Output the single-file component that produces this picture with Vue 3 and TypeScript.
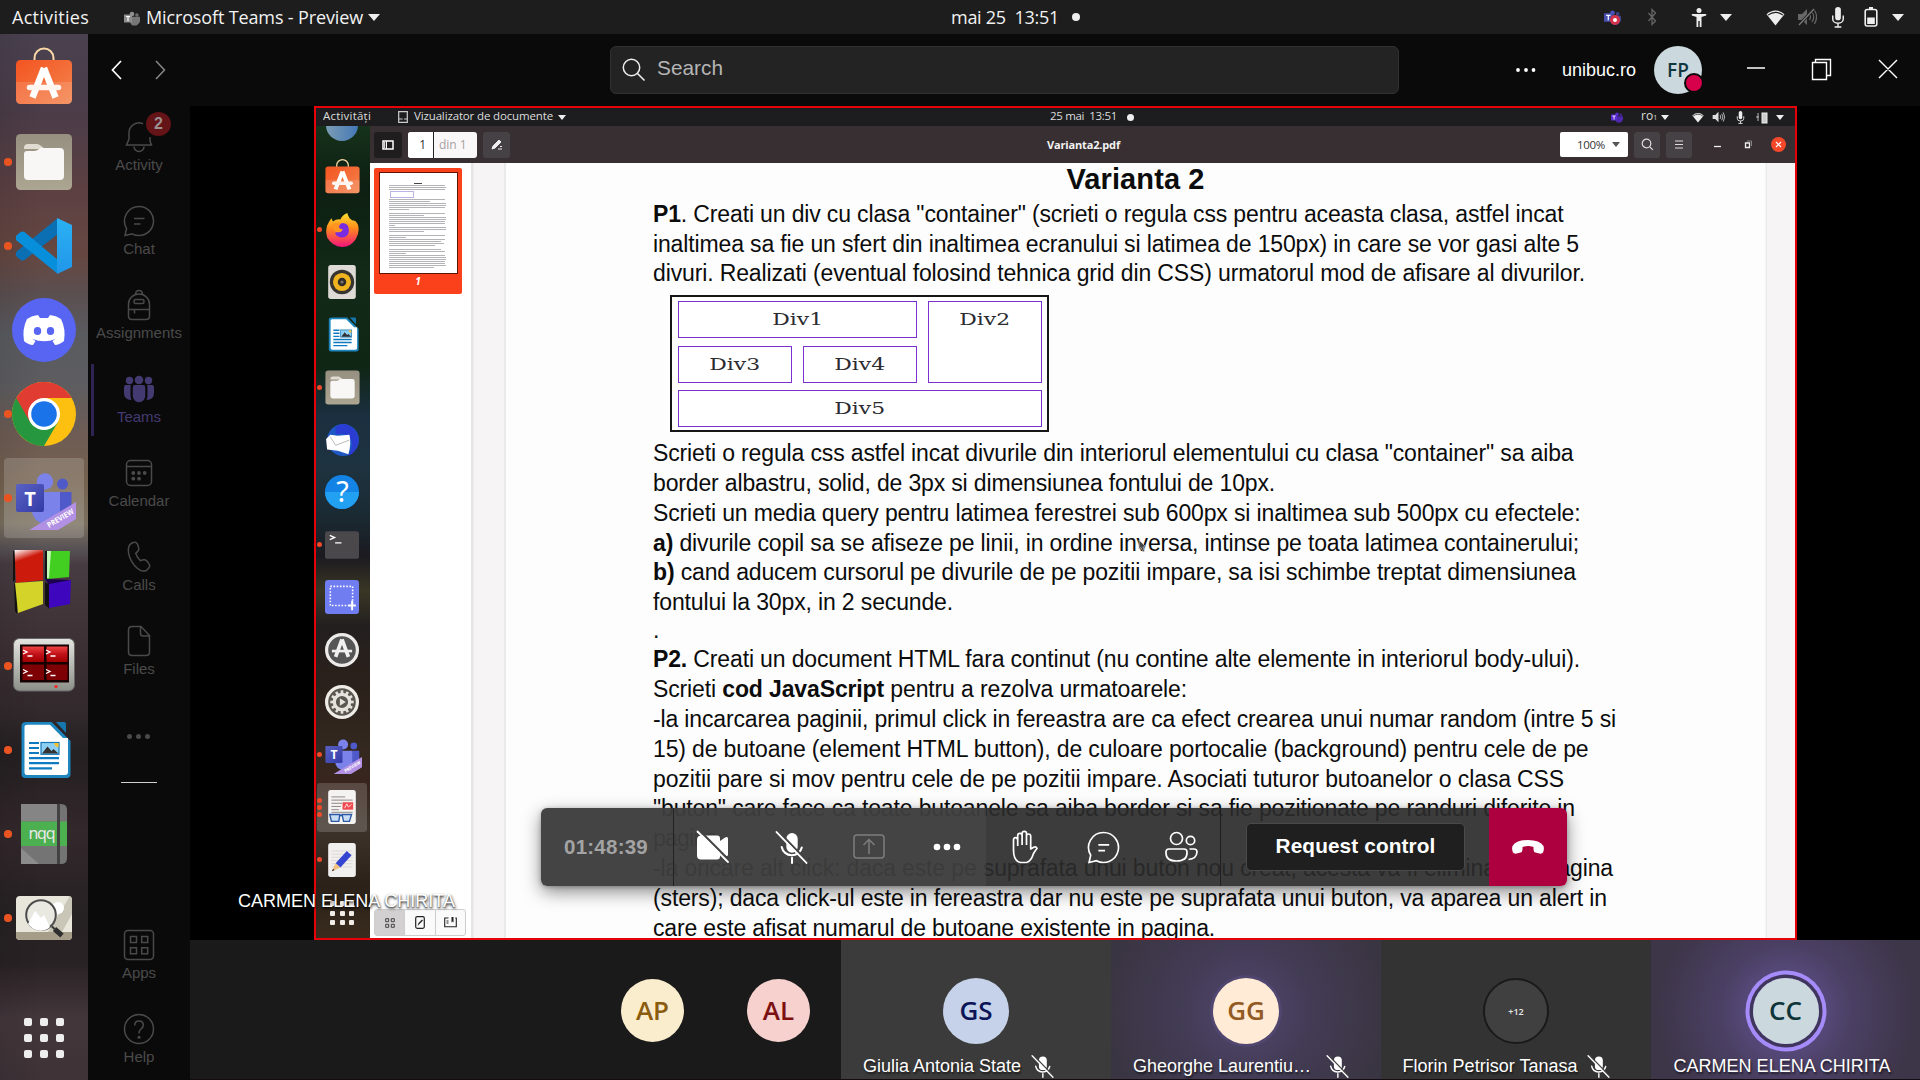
<script setup lang="ts">
type Run = { t: string; b?: boolean }
type Line = { w: number; runs: Run[] }

/* Tracks a single line of text out to a given width in pixels. */
const vFit = {
  mounted(el: HTMLElement, binding: { value: number }) {
    const natural = el.getBoundingClientRect().width
    const count = (el.textContent || '').length
    if (binding.value && count > 1) {
      el.style.letterSpacing = ((binding.value - natural) / count).toFixed(4) + 'px'
    }
  },
}

const line = (w: number, t: string): Line => ({ w, runs: [{ t }] })

const intro: Line[] = [
  { w: 910.5, runs: [{ t: 'P1', b: true }, { t: '. Creati un div cu clasa "container" (scrieti o regula css pentru aceasta clasa, astfel incat' }] },
  line(926, 'inaltimea sa fie un sfert din inaltimea ecranului si latimea de 150px) in care se vor gasi alte 5'),
  line(932, 'divuri. Realizati (eventual folosind tehnica grid din CSS) urmatorul mod de afisare al divurilor.'),
]
const middle: Line[] = [
  line(920.5, 'Scrieti o regula css astfel incat divurile din interiorul elementului cu clasa "container" sa aiba'),
  line(622, 'border albastru, solid, de 3px si dimensiunea fontului de 10px.'),
  line(927.5, 'Scrieti un media query pentru latimea ferestrei sub 600px si inaltimea sub 500px cu efectele:'),
  { w: 926, runs: [{ t: 'a)', b: true }, { t: ' divurile copil sa se afiseze pe linii, in ordine inversa, intinse pe toata latimea containerului;' }] },
  { w: 923, runs: [{ t: 'b)', b: true }, { t: ' cand aducem cursorul pe divurile de pe pozitii impare, sa isi schimbe treptat dimensiunea' }] },
  line(300, 'fontului la 30px, in 2 secunde.'),
]
const second: Line[] = [
  { w: 927, runs: [{ t: 'P2.', b: true }, { t: ' Creati un document HTML fara continut (nu contine alte elemente in interiorul body-ului).' }] },
  { w: 534, runs: [{ t: 'Scrieti ' }, { t: 'cod JavaScript', b: true }, { t: ' pentru a rezolva urmatoarele:' }] },
  line(963, '-la incarcarea paginii, primul click in fereastra are ca efect crearea unui numar random (intre 5 si'),
  line(935.5, '15) de butoane (element HTML button), de culoare portocalie (background) pentru cele de pe'),
  line(911, 'pozitii pare si mov pentru cele de pe pozitii impare. Asociati tuturor butoanelor o clasa CSS'),
  line(922, '"buton" care face ca toate butoanele sa aiba border si sa fie pozitionate pe randuri diferite in'),
  line(70, 'pagina.'),
  line(960, '-la oricare alt click: daca este pe suprafata unui buton nou creat, acesta va fi eliminat din pagina'),
  line(954, '(sters); daca click-ul este in fereastra dar nu este pe suprafata unui buton, va aparea un alert in'),
  line(562, 'care este afisat numarul de butoane existente in pagina.'),
]

const dock = [
  { id: 'software', dot: false }, { id: 'files', dot: true }, { id: 'code', dot: true },
  { id: 'discord', dot: false }, { id: 'chrome', dot: true }, { id: 'teams', dot: true, on: true },
  { id: 'blocks', dot: false }, { id: 'terminator', dot: true }, { id: 'writer', dot: true },
  { id: 'nqq', dot: true }, { id: 'viewer', dot: true },
]
const innerDock = [
  { id: 'software' }, { id: 'firefox', dots: 1 }, { id: 'rhythm' }, { id: 'writer' },
  { id: 'files', dots: 1 }, { id: 'bird' }, { id: 'help' }, { id: 'term', dots: 1 }, { id: 'shot' },
  { id: 'updater' }, { id: 'settings' }, { id: 'teams', dots: 1 }, { id: 'evince', dots: 3, on: true },
  { id: 'editor', dots: 1 },
] as { id: string; dots?: number; on?: boolean }[]

const apps = [
  { id: 'bell', label: 'Activity', badge: '2' }, { id: 'chat', label: 'Chat' },
  { id: 'bag', label: 'Assignments' }, { id: 'people', label: 'Teams', on: true },
  { id: 'cal', label: 'Calendar' }, { id: 'call', label: 'Calls' }, { id: 'file', label: 'Files' },
] as { id: string; label: string; badge?: string; on?: boolean }[]

const tiles = [
  { ini: 'GS', name: 'Giulia Antonia State', w: 158, cls: 'gs', muted: true, gap: 10 },
  { ini: 'GG', name: 'Gheorghe Laurentiu…', w: 178, cls: 'gg', muted: true, gap: 15 },
  { ini: '+12', name: 'Florin Petrisor Tanasa', w: 175, cls: 'more', muted: true, gap: 9 },
  { ini: 'CC', name: 'CARMEN ELENA CHIRITA', w: 217, cls: 'cc', muted: false, gap: 0 },
]
const clockMain = 'mai 25\u00a0\u00a013:51'
const clockShared = '25 mai\u00a0\u00a013:51'
const thumbLines = [88, 96, 98, 97, 0, 0, 0, 0, 96, 70, 98, 98, 97, 34, 0, 97, 60, 99, 98, 97, 96, 10, 99, 98, 60, 0, 97, 30, 96, 90, 95, 80, 0, 90, 97, 30, 96, 98, 98, 97, 96, 98, 78]
const teeth = Array.from({ length: 12 }, (_, i) => i * 30)
</script>

<template>
  <div class="screen">
    <svg class="defs" width="0" height="0">
      <defs>
        <linearGradient id="gOr" x1="0" y1="0" x2="1" y2="1"><stop offset="0" stop-color="#f35420" /><stop offset="1" stop-color="#f4854f" /></linearGradient>
        <linearGradient id="gGr" x1="0" y1="0" x2="0" y2="1"><stop offset="0" stop-color="#979081" /><stop offset="1" stop-color="#aca591" /></linearGradient>
        <linearGradient id="gVs" x1="0" y1="0" x2="0" y2="1"><stop offset="0" stop-color="#2bb2f3" /><stop offset="1" stop-color="#2196ea" /></linearGradient>
        <linearGradient id="gFx" x1="0" y1="0" x2="0" y2="1"><stop offset="0" stop-color="#ffe12f" /><stop offset=".45" stop-color="#ff8a1c" /><stop offset="1" stop-color="#f5127c" /></linearGradient>
        <linearGradient id="gRed" x1="0" y1="0" x2="0" y2="1"><stop offset="0" stop-color="#ef4444" /><stop offset=".5" stop-color="#c01018" /><stop offset="1" stop-color="#a00000" /></linearGradient>
        <linearGradient id="gCube" x1="0" y1="0" x2=".3" y2="1"><stop offset="0" stop-color="#fff" /><stop offset=".35" stop-color="#cc1a0d" /></linearGradient>
        <linearGradient id="gMon" x1="0" y1="0" x2="0" y2="1"><stop offset="0" stop-color="#e4e5e0" /><stop offset="1" stop-color="#8c8e88" /></linearGradient>
        <linearGradient id="gT" x1="0" y1="0" x2="1" y2="1"><stop offset="0" stop-color="#5a62c4" /><stop offset="1" stop-color="#343aa6" /></linearGradient>
      </defs>
      <symbol id="software" viewBox="0 0 64 64">
        <path d="M22.500 17v-5a9.500 9.500 0 0 1 19 0v5" fill="none" stroke="#fbd9a5" stroke-width="2" />
        <rect x="4" y="14" width="56" height="44" rx="4.500" fill="url(#gOr)" /><path d="M4 36h56v18q0 4-4 4H8q-4 0-4-4z" fill="#fff" opacity=".13" />
        <path d="M32 22 20.500 51.500M32 22l11.500 29.500" stroke="#fff" stroke-width="6.500" fill="none" stroke-linejoin="bevel" /><path d="M17.500 41.500h29" stroke="#fff4ee" stroke-width="5.500" stroke-linecap="round" />
      </symbol>
      <symbol id="files" viewBox="0 0 64 64">
        <rect x="4" y="4" width="56" height="56" rx="4.500" fill="url(#gGr)" /><path d="M12 18q0-4 4-4h9q2 0 3.500 1.500L33 19H12z" fill="#e0dcd2" /><path d="M12 24q0-3 3-3h7q3 0 5-2t4-1h17q4 0 4 4v24q0 4-4 4H16q-4 0-4-4z" fill="#f8f7f5" />
      </symbol>
      <symbol id="code" viewBox="0 0 64 64">
        <path d="M46 4v16L12.500 46q-2 1-4 0L4 42v-4z" fill="#0b6fb3" /><path d="M4 22l4.500-4q2-1 4 0L46 46v14L4 26z" fill="#078fdc" /><path d="M45 4l15 7v42l-15 7z" fill="url(#gVs)" />
      </symbol>
      <symbol id="discord" viewBox="0 0 64 64">
        <circle cx="32" cy="32" r="32" fill="#5865f2" /><path d="M26 17l2 3h8l2-3q6 .7 11 4 5 10 3 22-5 4-9 4l-2.500-4 3-2q-11 4.500-23 0l3 2-2.500 4q-5-.3-9-4-2-12 3-22 5-3.300 11-4z" fill="#fff" /><ellipse cx="25.500" cy="33" rx="3.700" ry="4" fill="#5865f2" /><ellipse cx="38.500" cy="33" rx="3.700" ry="4" fill="#5865f2" />
      </symbol>
      <symbol id="chrome" viewBox="0 0 64 64">
        <circle cx="32" cy="32" r="32" fill="#fdc010" /><path d="M32 32 4.300 16a32 32 0 0 0 27.700 48l14-24z" fill="#26963f" /><path d="M4.300 16A32 32 0 0 1 59.700 16H32v16L18 40z" fill="#e03c31" /><circle cx="32" cy="32" r="16" fill="#fff" /><circle cx="32" cy="32" r="12.800" fill="#1a73e8" />
      </symbol>
      <symbol id="teams" viewBox="0 0 64 64">
        <circle cx="50.500" cy="18" r="5.500" fill="#5059c9" /><circle cx="33" cy="15.500" r="8.200" fill="#7b83eb" /><path d="M48 26h11.500v16q0 8-8 8H44z" fill="#5059c9" /><path d="M22 26h26v18a14 14 0 0 1-28 0z" fill="#7b83eb" />
        <rect x="4" y="18" width="28" height="28" rx="2" fill="url(#gT)" /><text x="18" y="39.500" font-family="Open Sans, sans-serif" font-weight="700" font-size="20" fill="#fff" text-anchor="middle">T</text>
        <path d="M18 63.500 64 36v17L46 64H18z" fill="#b290e4" /><text transform="translate(37 62) rotate(-31)" font-family="Open Sans, sans-serif" font-weight="700" font-size="7.500" fill="#fff" textLength="29.500" lengthAdjust="spacingAndGlyphs">PREVIEW</text>
      </symbol>
      <symbol id="blocks" viewBox="0 0 64 64">
        <path d="M1 1l2-1v30l-2 2zM33 1h3v28h-3zM33 32l5 3v24l-5-4zM2 33l3 4v27l-2-3z" fill="#111" /><path d="M2.500 0H31v30L4 33z" fill="url(#gCube)" /><path d="M35 1h23l-1 26-22 2z" fill="#43cf22" /><path d="M3 33l28-2v23L6 63z" fill="#d4d32a" /><path d="M33 29l26 1-22 5z" fill="#1b0050" /><path d="M37 34l22-4-1 24-21 4z" fill="#3e06bd" /><path d="M35 1h4l-2 27h-2z" fill="#c7f7bb" />
      </symbol>
      <symbol id="terminator" viewBox="0 0 64 64">
        <rect x="1.500" y="4.500" width="61" height="52.500" rx="6" fill="url(#gMon)" stroke="#666" /><rect x="8" y="10.500" width="49" height="38" fill="#180000" /><g fill="url(#gRed)"><rect x="10.500" y="12.500" width="21.500" height="15.500" /><rect x="34.500" y="12.500" width="21" height="15.500" /></g><g fill="#7d0004"><rect x="10.500" y="30.500" width="21.500" height="15.500" /><rect x="34.500" y="30.500" width="21" height="15.500" /></g>
        <g transform="translate(0 -1)" stroke="#fff" stroke-width="1.300" fill="none"><path d="M11 17l4 2-4 2M15.500 23h5M34 17l4 2-4 2M38.500 23h5M11 36.500l4 2-4 2M15.500 42.500h5M34 36.500l4 2-4 2M38.500 42.500h5" /></g><circle cx="44" cy="52.500" r="1.600" fill="#f22" />
      </symbol>
      <symbol id="writer" viewBox="0 0 64 64">
        <path d="M14 4h25.500l19 19v33q0 4-4 4h-41q-4 0-4-4V8q0-4 4.500-4z" fill="#1d86bf" /><path d="M15.500 6.800H38L51 20h5v34q0 3-3 3H15q-2.500 0-2.500-3V9q0-2.200 3-2.200z" fill="#fff" /><path d="M44 4h8q2 0 2 2v9z" fill="#1577ae" />
        <path d="M17 25h10M17 30h10M17 35h10M17 40.200h30M17 45.200h30M17 50.300h23" stroke="#0f7abf" stroke-width="2.200" /><rect x="29" y="24.500" width="18" height="11.800" fill="#8ed0f3" stroke="#1577b8" stroke-width="1.200" /><path d="M30 35.500l5.500-7 4 4.500 2-2 5 4.500z" fill="#333" /><path d="M42 25h4.500v4.500q-4-1-4.500-4.500z" fill="#f9c22e" />
      </symbol>
      <symbol id="nqq" viewBox="0 0 64 64">
        <path d="M9 2h40q6 0 6 6v48q0 6-6 6H9z" fill="#747474" /><path d="M9 2h36v17H9z" fill="#858585" /><path d="M9 46l18 16H9z" fill="#8c8c8c" /><rect x="9" y="19.500" width="46" height="24.500" fill="#4caf50" /><rect x="45" y="2" width="3" height="60" fill="#424242" /><text x="16.500" y="36.500" font-family="Noto Sans, sans-serif" font-size="16" fill="#e8e8e8" textLength="27">nqq</text>
      </symbol>
      <symbol id="viewer" viewBox="0 0 64 64">
        <rect x="4" y="10" width="56" height="44" rx="4" fill="#e8e6db" /><path d="M36 46 58 10q2 1 2 4v32z" fill="#c9c6b8" /><path d="M50 46 60 28v18z" fill="#e9e7dc" /><path d="M4 46h56v4q0 4-4 4H8q-4 0-4-4z" fill="#a69d89" /><circle cx="46" cy="22" r="6" fill="#fff" /><circle cx="29" cy="29" r="14.800" fill="#e9e9e3" fill-opacity=".85" stroke="#4c4c4c" stroke-width="2" /><path d="M16 38l7-13 6 7 3-3 6 12a14 14 0 0 1-19 0z" fill="#fff" /><path d="M40 40.500l2.500 2.500" stroke="#333" stroke-width="2" /><path d="M42.500 43l7.500 6.500" stroke="#2e2e2e" stroke-width="5" />
      </symbol>
      <symbol id="firefox" viewBox="0 0 64 64">
        <path d="M8 16l4-6 3 6q6-5 14-4 3-8 13-12 2 10 10 14 6-1 10 8 4 14-4 27Q49 64 32 64 14 63 4 46-1 28 8 16z" fill="url(#gFx)" /><path d="M32 19q13 0 13 14 0 12-12 13-12 0-14-9l7-2q-4-6 0-12z" fill="#7a2be0" /><path d="M14 22q8-6 16-2-6 4-2 9l6 2q-4 7-11 5-9-3-9-14z" fill="#ff9420" />
      </symbol>
      <symbol id="rhythm" viewBox="0 0 64 64">
        <rect x="6" y="0" width="52" height="64" rx="5" fill="#dedad5" /><circle cx="32" cy="32" r="23" fill="#37332e" /><circle cx="32" cy="32" r="17" fill="#f0b51e" /><circle cx="32" cy="32" r="8" fill="#332d27" /><circle cx="32" cy="32" r="3" fill="#777" />
      </symbol>
      <symbol id="bird" viewBox="0 0 64 64">
        <circle cx="34" cy="32" r="30" fill="#1d58c4" /><path d="M20 8Q34-4 50 8q14 10 13 28-4 20-20 26 14-20 4-34-10-12-27-6z" fill="#2a3cd2" /><path d="M2 30l8-8 14 2 22-2q4 16-2 37L24 52 4 50z" fill="#fff" /><path d="M10 26l10 16 26-10" fill="none" stroke="#aaa" stroke-width="1.500" />
      </symbol>
      <symbol id="help" viewBox="0 0 64 64">
        <circle cx="32" cy="32" r="32" fill="#1483e6" /><path d="M0 32a32 32 0 0 0 64 0z" fill="#22a0f2" /><text x="33" y="51" font-family="Noto Sans, sans-serif" font-size="54" fill="#fff" text-anchor="middle">?</text>
      </symbol>
      <symbol id="term" viewBox="0 0 64 64"><rect x="0" y="6" width="64" height="52" rx="5" fill="#4b484c" /><path d="M9 14l9 4-9 4M19 28h12" stroke="#fff" stroke-width="2.600" fill="none" /></symbol>
      <symbol id="shot" viewBox="0 0 64 64"><rect width="64" height="64" rx="6" fill="#6f7df0" /><path d="M10 12h42v36H10z" fill="none" stroke="#fff" stroke-width="3" stroke-dasharray="3 3" /><path d="M51 39v18M44 48h14" stroke="#fff" stroke-width="3.500" /></symbol>
      <symbol id="updater" viewBox="0 0 64 64"><circle cx="32" cy="32" r="29" fill="#555" stroke="#ecebe9" stroke-width="6" /><path d="M32 12 20 45M32 12l12 33" stroke="#f0f0f0" stroke-width="7" /><path d="M13 34h38" stroke="#f0f0f0" stroke-width="5" /></symbol>
      <symbol id="settings" viewBox="0 0 64 64"><circle cx="32" cy="32" r="29" fill="#5b5750" stroke="#efece8" stroke-width="6" /><circle cx="32" cy="32" r="14.500" fill="none" stroke="#e6e3df" stroke-width="6" /><g stroke="#e6e3df" stroke-width="5"><path v-for="a in teeth" :key="a" d="M32 10v7" :transform="`rotate(${a} 32 32)`" /></g><path d="M28 25l11 7-11 7z" fill="#e6e3df" /></symbol>
      <symbol id="evince" viewBox="0 0 64 64"><rect x="6" width="52" height="64" rx="5" fill="#f5f3f2" /><path d="M12 13h26M12 19h40M12 25h20M12 31h18M12 37h14M12 42h40" stroke="#8c8580" stroke-width="1.800" /><rect x="33" y="23" width="20" height="14" fill="#ef4a4f" /><path d="M37 34l4-8 3 6 6-5" fill="none" stroke="#fff" stroke-width="1.500" /><path d="M9 46h19l-2 13H12zM32 46h18l-4 13H35zM28 48h5" fill="#c7dcf5" stroke="#2b57a5" stroke-width="2.600" /></symbol>
      <symbol id="editor" viewBox="0 0 64 64"><rect x="6" width="52" height="64" rx="5" fill="#f2f0ef" /><path d="M12 15h40M12 21h40M12 27h40M12 33h40M12 39h40M12 45h40" stroke="#d6d3cf" stroke-width="1.500" /><path d="M20 38 41 15l9 8-21 23z" fill="#3445d2" /><path d="M20 38l9 8-16 7z" fill="#f1c27b" /><path d="M13 53l2-4 3 2z" fill="#111" /></symbol>

      <symbol id="bell" viewBox="0 0 32 32"><path d="M20 2.700A10 10 0 0 0 6 12v6l-2.500 6h25L27 20v-4M11 25.500a5 5 0 0 0 10 0" /></symbol>
      <symbol id="chat" viewBox="0 0 32 32"><path d="M16 1.500A14.500 14.500 0 1 1 9.200 28.800L2 30.500l1.600-7A14.500 14.500 0 0 1 16 1.500zM11 13.500h10.500M11 19h6.500" /></symbol>
      <symbol id="bag" viewBox="0 0 32 32"><path d="M12.500 5.500q0-4 3.500-4t3.500 4M5.500 15A10.500 10 0 0 1 26.500 15v12q0 3.500-3.500 3.500H9q-3.500 0-3.500-3.500zM5.500 20.500h21M11.500 20.500v4M12.500 10.500h7q1.500 0 1.500 2t-1.500 2h-7q-1.500 0-1.500-2t1.500-2z" /></symbol>
      <symbol id="people" viewBox="0 0 32 32"><g fill="currentColor" stroke="none"><circle cx="16" cy="7" r="4.300" /><circle cx="6.500" cy="7.500" r="3.700" /><circle cx="25.500" cy="7.500" r="3.700" /><path d="M9.800 14q0-2 2-2h8.400q2 0 2 2v9a6.200 6.200 0 0 1-12.400 0zM1 14q0-2 2-2h5q-.5 1-.5 2v9q0 2 1 4Q1 27 1 20zM31 14q0-2-2-2h-5q.5 1 .5 2v9q0 2-1 4 7.500 0 7.500-7z" /></g></symbol>
      <symbol id="cal" viewBox="0 0 32 32"><rect x="3.500" y="3.500" width="25" height="25" rx="4" /><path d="M3.500 9.500h25" /><g fill="currentColor" stroke="none"><circle cx="10.300" cy="16" r="1.900" /><circle cx="16" cy="16" r="1.900" /><circle cx="21.700" cy="16" r="1.900" /><circle cx="10.300" cy="21.700" r="1.900" /><circle cx="16" cy="21.700" r="1.900" /></g></symbol>
      <symbol id="call" viewBox="0 0 32 32"><path d="M9.500 1.700q4-1.600 5.200 2l1 3.200q.5 2-1 3.500l-2 2q1.500 4 4.800 7.300l2.800-.9q2-.5 3.300 1l2.300 2.800q1.500 2.200 0 4.200-3 4.500-8 2.800Q10.500 26 6.600 16 3 4.500 9.500 1.700z" /></symbol>
      <symbol id="file" viewBox="0 0 32 32"><path d="M9 1.500h9l8.500 9V27q0 3.500-3.500 3.500H9q-3.500 0-3.500-3.500V5q0-3.500 3.500-3.500zM17.500 2v6.500q0 2.500 2.500 2.500h6" /></symbol>
      <symbol id="grid4" viewBox="0 0 32 32"><rect x="1.500" y="1.500" width="29" height="29" rx="3.500" /><path d="M7.500 7.500h6v6h-6zM18.700 7.500h6v6h-6zM7.500 18.700h6v6h-6zM18.700 18.700h6v6h-6z" /></symbol>
      <symbol id="ask" viewBox="0 0 32 32"><circle cx="16" cy="16" r="14.500" /><path d="M11.700 12.500q0-4.500 4.300-4.500t4.300 4.200q0 2-2.300 3.800-2 1.600-2 4.500" /><circle cx="16" cy="24.300" r="1.500" fill="currentColor" stroke="none" /></symbol>

      <symbol id="wifi" viewBox="0 0 20 18"><path d="M.5 5.500Q10-2.500 19.500 5.500L10 17.500z" fill="#eee" /><path d="M2 6.500Q10 .5 18 6.500" fill="none" stroke="#1d1d1d" stroke-width="1.200" /></symbol>
      <symbol id="mic" viewBox="0 0 14 22"><rect x="4" y="0" width="6" height="14" rx="3" fill="#eee" /><path d="M1.500 9v3.500a5.500 4.500 0 0 0 11 0V9M7 17v3.500M3.500 21h7" fill="none" stroke="#eee" stroke-width="1.500" /></symbol>
      <symbol id="micoff" viewBox="0 0 32 32"><path d="M11 7.500a5.500 5.500 0 0 1 11 0v8a5.500 5.500 0 0 1-11 0z" fill="#fff" /><path d="M6.500 15.500a10 10 0 0 0 19.500.5M16.500 26v5" fill="none" stroke="#fff" stroke-width="2" stroke-linecap="round" /><path d="M3 0l29 30" stroke="#444" stroke-width="2" /><path d="M1.500 1l29 30" stroke="#fff" stroke-width="1.800" stroke-linecap="round" /></symbol>
      <symbol id="speaker" viewBox="0 0 20 18"><path d="M1 6h4l5-5v16l-5-5H1z" fill="currentColor" /><path d="M12.500 6q2 3 0 6M15 4q3.500 5 0 10M17.300 2q4.500 7 0 14" fill="none" stroke="currentColor" stroke-width="1.200" /></symbol>
      <symbol id="mini" viewBox="0 0 18 16"><circle cx="9" cy="3" r="2.600" fill="currentColor" /><circle cx="14.500" cy="4" r="2" fill="currentColor" opacity=".7" /><path d="M7 6h11v5q-2 5-6 5-5 0-5-5z" fill="currentColor" opacity=".8" /><rect x="0" y="3.500" width="9" height="9" fill="currentColor" /><path d="M2.300 5.800h4.500M4.500 6v5" stroke="#fff" stroke-width="1.300" /></symbol>
    </svg>

    <header class="topbar">
      <div class="tb-left">
        <span v-fit="77">Activities</span>
        <svg class="mini" width="16" height="15"><use href="#mini" /></svg>
        <span v-fit="217">Microsoft Teams - Preview</span>
        <i class="caret" />
      </div>
      <div class="tb-mid"><span v-fit="108">{{ clockMain }}</span><i class="bead" /></div>
      <div class="tb-right">
        <span class="s" style="margin-left: 19px"><svg width="17" height="15" class="blue"><use href="#mini" /></svg><b class="rb" /></span>
        <span class="s" style="margin-left: 40px"><svg width="10" height="18" viewBox="0 0 10 18"><path d="M1.500 5l7 8L5 16.500v-15L8.500 5l-7 8" fill="none" stroke="#666" stroke-width="1.300" /></svg></span>
        <span class="s" style="margin-left: 47px"><svg width="16" height="19" viewBox="0 0 16 19"><circle cx="8" cy="2.500" r="2.500" fill="#eee" /><path d="M.8 6h14.400v1.600L10.500 9v10H8.700v-6H7.300v6H5.500V9L.8 7.600z" fill="#eee" /></svg></span>
        <span class="s" style="margin-left: 27px"><i class="caret" /></span>
        <span class="s" style="margin-left: 49px"><svg width="19" height="17"><use href="#wifi" /></svg></span>
        <span class="s" style="margin-left: 32px"><svg width="20" height="18" viewBox="0 0 20 18" class="dim"><use href="#speaker" /><path d="M17 1 2 17" stroke="#1d1d1d" stroke-width="3" /><path d="M17 1 2 17" stroke="#777" stroke-width="1.400" /></svg></span>
        <span class="s" style="margin-left: 31px"><svg width="14" height="21"><use href="#mic" /></svg></span>
        <span class="s" style="margin-left: 33px"><svg width="14" height="20" viewBox="0 0 14 20"><path d="M5 1h4" stroke="#eee" stroke-width="2" /><rect x="1.200" y="2.500" width="11.600" height="16.500" rx="2" fill="none" stroke="#eee" stroke-width="1.600" /><rect x="3.200" y="10.500" width="7.600" height="6.500" fill="#eee" /></svg></span>
        <span class="s" style="margin-left: 27px"><i class="caret" /></span>
      </div>
    </header>

    <div class="body">
      <nav class="dock">
        <div v-for="d in dock" :key="d.id" class="slot" :class="{ on: d.on }">
          <i v-if="d.dot" class="run" />
          <svg width="64" height="64"><use :href="'#' + d.id" /></svg>
        </div>
        <div class="dots9"><i v-for="n in 9" :key="n" /></div>
      </nav>

      <div class="teams">
        <div class="head">
          <svg class="nav" width="60" height="20" viewBox="0 0 60 20"><path d="M10 1 1.500 10 10 19" fill="none" stroke="#fff" stroke-width="1.700" /><path d="M45 1l8.500 9L45 19" fill="none" stroke="#888" stroke-width="1.500" /></svg>
          <div class="search">
            <svg width="24" height="24" viewBox="0 0 24 24"><circle cx="9.500" cy="9.500" r="8.200" fill="none" stroke="#eee" stroke-width="1.500" /><path d="M15.500 15.500l7 7" stroke="#eee" stroke-width="1.600" /></svg>
            <span v-fit="66">Search</span>
          </div>
          <svg class="dots" width="22" height="6"><g fill="#fff"><circle cx="3" cy="3" r="1.900" /><circle cx="11" cy="3" r="1.900" /><circle cx="18.500" cy="3" r="1.900" /></g></svg>
          <span v-fit="74" class="org">unibuc.ro</span>
          <div class="me"><span>FP</span><i /></div>
          <svg class="win" width="152" height="24" viewBox="0 0 152 24"><g fill="none" stroke="#fff" stroke-width="1.400"><path d="M1 11h18M66.500 5.500h14v17h-14zM69.500 5V2.500h15v16h-3.500M133 3l18 18M151 3l-18 18" /></g></svg>
        </div>

        <div class="main">
          <aside class="rail">
            <div v-for="a in apps" :key="a.id" class="app" :class="{ on: a.on }">
              <svg width="32" height="32"><use :href="'#' + a.id" /></svg>
              <span>{{ a.label }}</span>
              <b v-if="a.badge">{{ a.badge }}</b>
            </div>
            <div class="more3"><i /><i /><i /></div>
            <div class="rule" />
            <div class="app low"><svg width="32" height="32"><use href="#grid4" /></svg><span>Apps</span></div>
            <div class="app"><svg width="32" height="32"><use href="#ask" /></svg><span>Help</span></div>
          </aside>

          <section class="stage">
            <div class="share">
              <div class="stop">
                <span v-fit="48">Activități</span>
                <svg class="dv" width="10" height="12" viewBox="0 0 10 12"><path d="M.7.700h8.600v10.600H.7zM.7 8h4M6 8h3" fill="none" stroke="#ccc" stroke-width="1.200" /></svg>
                <span v-fit="139">Vizualizator de documente</span><i class="caret sm" />
                <span v-fit="67" class="clock">{{ clockShared }}</span><i class="bead sm" />
                <div class="str">
                  <svg width="12" height="11" class="violet"><use href="#mini" /></svg>
                  <span class="ro">ro<small>1</small></span><i class="caret sm" />
                  <svg class="wf" width="12" height="11"><use href="#wifi" /></svg>
                  <svg class="sp" width="13" height="12"><use href="#speaker" /></svg>
                  <svg class="mc" width="9" height="13"><use href="#mic" /></svg>
                  <svg class="bt" width="12" height="13" viewBox="0 0 12 13"><path d="M2 2v8M0 6h3" stroke="#bbb" /><rect x="6" y="2" width="5" height="10" fill="#ccc" stroke="#eee" /></svg>
                  <i class="caret sm" />
                </div>
              </div>
              <div class="sbody">
                <div class="sdock">
                  <div class="peek"><i /></div>
                  <div v-for="d in innerDock" :key="d.id" class="sslot" :class="{ on: d.on }">
                    <span v-if="d.dots" class="sruns"><i v-for="n in d.dots" :key="n" /></span>
                    <svg :width="d.id === 'software' || d.id === 'files' || d.id === 'writer' || d.id === 'teams' ? 39 : 34" :height="d.id === 'software' || d.id === 'files' || d.id === 'writer' || d.id === 'teams' ? 39 : 34"><use :href="'#' + d.id" /></svg>
                  </div>
                  <div class="dots9 s9"><i v-for="n in 9" :key="n" /></div>
                </div>
                <div class="pdf">
                  <div class="ptool">
                    <div class="pb dark"><svg width="12" height="10" viewBox="0 0 12 10"><rect x="1" y="1" width="10" height="8" fill="none" stroke="#fff" stroke-width="1.500" /><path d="M2.700 2v6M4.500 1v8" stroke="#fff" /></svg></div>
                    <div class="entry"><span>1</span><em>din 1</em></div>
                    <div class="pb edit"><svg width="12" height="11" viewBox="0 0 12 11"><path d="M1 10l1-3 6-6 2 2-6 6zM7 10h4M9 7.500h2" fill="#eee" stroke="#eee" /></svg></div>
                    <b v-fit="73" class="ptitle">Varianta2.pdf</b>
                    <div class="zoom"><span v-fit="28">100%</span><i class="caret sm" /></div>
                    <div class="pb find"><svg width="13" height="13" viewBox="0 0 13 13"><circle cx="5.500" cy="5.500" r="4.300" fill="none" stroke="#ddd" stroke-width="1.200" /><path d="M8.800 8.800l3 3" stroke="#ddd" stroke-width="1.200" /></svg></div>
                    <div class="pb menu"><svg width="8" height="9" viewBox="0 0 8 9"><path d="M0 1h8M0 4.500h8M0 8h8" stroke="#ddd" stroke-width="1.100" /></svg></div>
                    <svg class="pwin" width="74" height="15" viewBox="0 0 74 15"><path d="M1 9.500h7" stroke="#eee" stroke-width="1.300" /><path d="M32.500 6h4v4.500h-4z" fill="none" stroke="#eee" stroke-width="1.300" /><path d="M34 4h4.500v5" fill="none" stroke="#999" stroke-width=".8" /><circle cx="65.500" cy="7.500" r="7.500" fill="#f4482a" /><path d="M63 5l5 5M68 5l-5 5" stroke="#fff" stroke-width="1.200" /></svg>
                  </div>
                  <div class="pmain">
                    <div class="pside">
                      <div class="thumb">
                        <div class="tp"><i v-for="(w, i) in thumbLines" :key="i" :style="{ width: w + '%' }" /><u /></div>
                        <span>1</span>
                      </div>
                      <div class="tabs">
                        <div class="sel"><svg width="10" height="10" viewBox="0 0 10 10"><path d="M.7.700h3v3h-3zM6.300.700h3v3h-3zM.7 6.300h3v3h-3zM6.300 6.300h3v3h-3z" fill="none" stroke="#444" /></svg></div>
                        <div><svg width="10" height="13" viewBox="0 0 10 13"><rect x=".7" y=".7" width="8.600" height="11.600" rx="1.500" fill="none" stroke="#222" stroke-width="1.200" /><path d="M2.500 10l1-3L7 3.500l1 1L4.500 8z" fill="#222" /></svg></div>
                        <div><svg width="13" height="11" viewBox="0 0 13 11"><path d="M6.500 9.800H.7V1h3.800M6.500 9.800h5.800V1h-1M2.500 4h2M2.500 6h2" fill="none" stroke="#222" stroke-width="1.100" /><path d="M7.500 0h2v5.500l-1-1-1 1z" fill="#222" /></svg></div>
                      </div>
                    </div>
                    <div class="page">
                      <h1><span v-fit="138">Varianta 2</span></h1>
                      <p v-for="(l, i) in intro" :key="'i' + i"><span v-fit="l.w"><component :is="r.b ? 'b' : 'span'" v-for="(r, j) in l.runs" :key="j">{{ r.t }}</component></span></p>
                      <div class="fig">
                        <div class="d1"><span>Div1</span></div><div class="d2"><span>Div2</span></div>
                        <div class="d3"><span>Div3</span></div><div class="d4"><span>Div4</span></div>
                        <div class="d5"><span>Div5</span></div>
                      </div>
                      <p v-for="(l, i) in middle" :key="'m' + i"><span v-fit="l.w"><component :is="r.b ? 'b' : 'span'" v-for="(r, j) in l.runs" :key="j">{{ r.t }}</component></span></p>
                      <p class="dotline">.</p>
                      <p v-for="(l, i) in second" :key="'s' + i"><span v-fit="l.w"><component :is="r.b ? 'b' : 'span'" v-for="(r, j) in l.runs" :key="j">{{ r.t }}</component></span></p>
                      <svg class="cursor" width="9" height="14" viewBox="0 0 9 14"><path d="M1 1v9l2-1.500L5 13l1.500-1L5 8h3z" fill="#444" stroke="#ccc" stroke-width=".7" /></svg>
                    </div>
                    <div class="gutter" />
                  </div>
                </div>
              </div>
            </div>

            <div class="speaker"><span v-fit="217">CARMEN ELENA CHIRITA</span></div>

            <div class="bar">
              <div class="time"><span v-fit="84">01:48:39</span></div>
              <div class="left">
                <svg width="34" height="34" viewBox="0 0 34 34"><path d="M6 5.500h15q3 0 3 3v2.500l5-3.500q3-1.500 3 1v16q0 2.500-3 1l-5-3.500v4.500q0 3-3 3H5q-4 0-4-4V9.500q0-4 5-4z" fill="#fff" /><path d="M3 0l31 31" stroke="#444" stroke-width="2.200" /><path d="M1.500 1.500 32 32" stroke="#fff" stroke-width="1.800" stroke-linecap="round" /></svg>
                <svg width="33" height="33"><use href="#micoff" /></svg>
                <svg width="32" height="26" viewBox="0 0 32 26"><rect x="1" y="1" width="30" height="23" rx="3" fill="none" stroke="#7d7d7d" stroke-width="1.500" /><path d="M16 20V5.500M10.500 11 16 5.500l5.500 5.500" fill="none" stroke="#7d7d7d" stroke-width="1.500" /></svg>
                <svg width="28" height="8"><g fill="#fff"><circle cx="4" cy="4" r="3.300" /><circle cx="14" cy="4" r="3.300" /><circle cx="24" cy="4" r="3.300" /></g></svg>
              </div>
              <div class="right">
                <svg width="28" height="34" viewBox="0 0 28 34"><path d="M2.500 17V10q0-2.300 2-2.300t2.200 2.300v6M6.700 15V5.500q0-2.200 2.200-2.200t2.200 2.200V15M11.100 14V3.500q0-2.200 2.200-2.200t2.200 2.200V15M15.500 15V6q0-2 2-2t2.200 2v13l3-1.700q2.500-1.200 3.300 1.200-1.500 1.500-3.500 5-2.500 8-7 9H9.500Q2.500 31 2.500 20v-4" fill="none" stroke="#fff" stroke-width="1.700" stroke-linejoin="round" /></svg>
                <svg width="33" height="33" class="line"><use href="#chat" /></svg>
                <svg width="33" height="32" viewBox="0 0 33 32"><g fill="none" stroke="#fff" stroke-width="1.700"><circle cx="11.500" cy="7.500" r="6" /><circle cx="25.500" cy="9.500" r="4.200" /><path d="M4 18h15q3 0 3 3v1q0 8-10.500 8T1 22v-1q0-3 3-3zM24.500 18H29q3 0 3 3-.5 7-8.500 7.500" /></g></svg>
              </div>
              <div class="req"><button><span v-fit="160">Request control</span></button></div>
              <div class="hang"><svg width="32" height="14" viewBox="0 0 32 14"><path d="M16 0q12 0 15.500 6 1 3-.5 6.500-1 1.500-3.500 1l-4-1q-2-.5-2-3V7Q16 5 10.500 7v2.500q0 2.500-2 3l-4 1q-2.500.5-3.500-1Q-.5 9 .5 6 4 0 16 0z" fill="#fff" /></svg></div>
            </div>

            <div class="strip">
              <div class="av ap">AP</div>
              <div class="av al">AL</div>
              <div v-for="t in tiles" :key="t.ini" class="tile" :class="t.cls">
                <div class="ring"><div class="face">{{ t.ini }}</div></div>
                <div class="nm"><span v-fit="t.w">{{ t.name }}</span><svg v-if="t.muted" :style="{ marginLeft: t.gap + 'px' }" width="23" height="23"><use href="#micoff" /></svg></div>
              </div>
            </div>
          </section>
        </div>
      </div>
    </div>
  </div>
</template>

<style>
html, body { margin: 0; background: #000; overflow: hidden; }
</style>

<style scoped>
* { box-sizing: border-box; }
.screen { width: 1920px; height: 1080px; overflow: hidden; display: flex; flex-direction: column; background: #000; color: #fff; font-family: "Liberation Sans", Arial, sans-serif; }
.defs { position: absolute; }
svg { display: block; flex: none; }
span { white-space: pre; }
.caret { display: block; border: 6px solid transparent; border-top: 7px solid #eee; border-bottom: 0; flex: none; }
.caret.sm { border-width: 4px; border-top-width: 5px; border-bottom: 0; }
.bead { width: 8px; height: 8px; border-radius: 50%; background: #eee; flex: none; }
.bead.sm { width: 7px; height: 7px; }

.topbar { height: 34px; flex: none; background: #1d1d1d; display: flex; align-items: center; font: 18px/34px "Open Sans", "Noto Sans", sans-serif; color: #f2f2f2; }
.topbar > div { display: flex; align-items: center; height: 34px; flex: none; }
.topbar span { display: inline-block; }
.tb-left { width: 951px; padding-left: 12px; }
.tb-left .mini { margin: 2px 6px 0 35px; color: #8e8e8e; }
.tb-left .caret { margin-left: 5px; }
.tb-mid { width: 642px; }
.tb-mid .bead { margin-left: 13px; }
.tb-right .s { display: flex; justify-content: center; align-items: center; position: relative; flex: none; width: 0; height: 34px; }
.tb-right .blue { color: #4a51b5; }
.tb-right .dim { color: #666; }
.tb-right .rb { position: absolute; left: -2px; top: 15px; width: 10px; height: 10px; border-radius: 50%; background: #fff; border: 3px solid #d3344c; }

.body { flex: 1; display: flex; min-height: 0; }
.dock { width: 88px; flex: none; padding-top: 2px; display: flex; flex-direction: column; align-items: center; background: linear-gradient(90deg, rgba(0,0,0,.08), rgba(0,0,0,0) 50%), linear-gradient(180deg, #4a4150 0, #4b3c48 80px, #5b4043 150px, #664741 220px, #5b4f50 260px, #5a5b60 300px, #5d5d60 350px, #6e5c54 400px, #75624f 450px, #7b7160 490px, #565055 516px, #473c41 530px, #3c2f33 620px, #31292c 680px, #241f21 720px, #33282c 800px, #262123 880px, #292225 930px, #44373c 985px, #3e3237 1046px); }
.slot { height: 84px; width: 88px; flex: none; display: flex; align-items: center; justify-content: center; position: relative; }
.slot.on::before { content: ""; position: absolute; left: 4px; top: 2px; width: 80px; height: 80px; border-radius: 4px; background: rgba(255,255,255,.17); }
.slot svg { position: relative; }
.run { position: absolute; left: 4px; top: 38px; width: 7.500px; height: 7.500px; border-radius: 50%; background: #e95420; }
.dots9 { display: grid; grid-template-columns: repeat(3, 8px); gap: 8px; margin-top: 58px; }
.dots9 i { width: 8px; height: 8px; border-radius: 2px; background: #eee; }

.teams { flex: 1; display: flex; flex-direction: column; min-width: 0; }
.head { height: 72px; flex: none; background: #0a0a0a; display: flex; align-items: center; }
.nav { margin-left: 23px; }
.search { margin-left: 439px; width: 789px; height: 48px; background: #232323; border: 1px solid #303030; border-radius: 6px; display: flex; align-items: center; padding-left: 11px; font-size: 20.800px; color: #b5b5b5; flex: none; }
.search span { margin: 0 0 4px 11px; display: inline-block; }
.dots { margin-left: 116px; }
.org { margin-left: 25px; font-size: 18px; display: inline-block; flex: none; }
.me { position: relative; margin-left: 18px; width: 48px; height: 48px; border-radius: 50%; background: #cbd8dd; color: #12373d; display: flex; align-items: center; justify-content: center; font: 600 19px "Open Sans", sans-serif; flex: none; }
.me i { position: absolute; left: 30px; top: 27px; width: 20px; height: 20px; border-radius: 50%; background: #d6004b; border: 2.500px solid #0a0a0a; }
.win { margin-left: 44px; margin-top: -3px; }

.main { flex: 1; display: flex; min-height: 0; }
.rail { width: 102px; flex: none; background: #0a0a0a; color: #4a4a4a; display: flex; flex-direction: column; }
.app { height: 84px; flex: none; position: relative; display: flex; flex-direction: column; align-items: center; padding-top: 15px; font-size: 15px; line-height: 20px; }
.app svg { fill: none; stroke: currentColor; stroke-width: 1.500; }
.app span { margin-top: 2px; }
.app.on { color: #443a72; }
.app.on::before { content: ""; position: absolute; left: 3px; top: 6px; width: 3px; height: 72px; background: #2f2352; }
.app b { position: absolute; left: 58px; top: 6px; width: 25px; height: 24px; border-radius: 50%; background: #641316; color: #9b8f90; font: 700 16px/24px "Liberation Sans", sans-serif; text-align: center; }
.more3 { margin: 39.500px 0 0 39px; display: flex; gap: 4px; }
.more3 i { width: 5px; height: 5px; border-radius: 50%; background: #4a4a4a; }
.rule { width: 36px; height: 1px; background: #d0d0d0; margin: 43px 0 0 33px; flex: none; }
.app.low { margin-top: 131px; }

.stage { flex: 1; position: relative; display: flex; flex-direction: column; min-width: 0; background: #000; }
.share { width: 1483px; height: 834px; margin-left: 124px; border: 2px solid #e60008; flex: none; display: flex; flex-direction: column; background: #fff; overflow: hidden; }
.stop { height: 18px; flex: none; background: #1d1d1f; display: flex; align-items: center; padding-left: 7px; font: 11.500px/16px "Open Sans", "Noto Sans", sans-serif; color: #dcdcdc; }
.stop > span { display: inline-block; height: 18px; }
.stop .dv { margin: 0 6px 0 27px; }
.stop .caret { margin-left: 5px; }
.stop .clock { margin-left: 484px; }
.stop .bead { margin-left: 10px; }
.str { display: flex; align-items: center; margin-left: 477px; color: #ddd; }
.violet { color: #5a2bd0; }
.ro { margin-left: 18px; height: 18px; font-size: 12px; }
.ro small { font-size: 7px; }
.stop .ro + .caret { margin-left: 4px; }
.wf { margin-left: 23px; } .sp { margin-left: 8px; } .mc { margin-left: 11px; } .bt { margin-left: 11px; } .stop .bt + .caret { margin-left: 8px; }
.sbody { flex: 1; display: flex; min-height: 0; }
.sdock { width: 54px; flex: none; display: flex; flex-direction: column; align-items: center; background: linear-gradient(180deg, #16321b 0, #0d1f12 60px, #122a17 150px, #0f2614 240px, #1b2f40 290px, #1e3340 340px, #1a2a33 390px, #1b1a20 430px, #3a3625 465px, #231f1f 500px, #2b211b 560px, #33281f 620px, #38251d 660px, #3e342b 700px, #2b2119 760px, #392c1e 812px); }
.peek { height: 25px; width: 54px; overflow: hidden; display: flex; justify-content: center; flex: none; padding-right: 2px; }
.peek i { width: 32px; height: 32px; margin-top: -17px; border-radius: 50%; background: linear-gradient(90deg, #7c9db5, #4378b6); }
.sslot { height: 52.500px; width: 54px; flex: none; display: flex; align-items: center; justify-content: center; position: relative; padding-right: 2px; }
.sslot.on::before { content: ""; position: absolute; left: 1px; top: 2px; width: 50px; height: 49px; border-radius: 3px; background: rgba(255,255,255,.17); }
.sslot svg { position: relative; }
.sruns { position: absolute; left: 1px; top: 0; height: 100%; display: flex; flex-direction: column; justify-content: center; gap: 2px; }
.sruns i { width: 5px; height: 5px; border-radius: 50%; background: #f04a2a; }
.s9 { grid-template-columns: repeat(3, 5px); gap: 4.500px; margin: 15px 2px 0 0; }
.s9 i { width: 5px; height: 5px; border-radius: 1px; background: #f2ece6; }
.pdf { flex: 1; min-width: 0; display: flex; flex-direction: column; }
.ptool { height: 37px; flex: none; background: #372f32; display: flex; align-items: center; padding-left: 4px; font-family: "Open Sans", "Noto Sans", sans-serif; }
.ptool span, .ptool b { display: inline-block; }
.pb { height: 26px; border-radius: 3px; background: #464144; display: flex; align-items: center; justify-content: center; flex: none; }
.pb.dark { width: 28px; background: #1f1d1e; }
.entry { margin-left: 6px; width: 69px; height: 26px; background: #faf7f8; border-radius: 3px; display: flex; align-items: center; font-size: 12px; color: #333; overflow: hidden; }
.entry span { width: 26px; height: 26px; line-height: 25px; background: #fff; border-right: 1px solid #222; text-align: right; padding-right: 7px; }
.entry em { font-style: normal; color: #a5a2a2; margin-left: 5px; }
.edit { margin-left: 6px; width: 27px; }
.ptitle { margin-left: 537px; margin-top: -1px; font-size: 11px; color: #f3f3f3; }
.zoom { margin-left: 440px; width: 68px; height: 25px; border-radius: 2px; background: #fff; display: flex; align-items: center; padding-left: 17px; color: #333; font-size: 11.500px; flex: none; }
.zoom .caret { border-top-color: #555; margin-left: 7px; }
.find { margin-left: 6px; width: 26px; } .menu { margin-left: 6px; width: 26px; }
.pwin { margin-left: 21px; }
.pmain { flex: 1; display: flex; min-height: 0; }
.pside { width: 101px; flex: none; display: flex; flex-direction: column; background: #fff; padding: 5px 0 2px 4px; }
.thumb { width: 88px; height: 126px; background: #fb411c; border-radius: 2px; padding: 4px 5px; text-align: center; font: 700 italic 10px/15px "Open Sans", sans-serif; }
.tp { position: relative; height: 102px; width: 79px; background: #fff; border: 1px solid #5e1404; padding: 10px 10px 0 9px; display: flex; flex-direction: column; gap: 1px; }
.tp i { height: 1px; background: #b4b4b8; flex: none; }
.tp i:first-child { width: 8px !important; margin-left: 25px; background: #444; }
.tp u { position: absolute; left: 10px; top: 18px; width: 24px; height: 7px; border: 1px solid #b9b4e4; }
.tabs { margin-top: auto; width: 92px; height: 27px; border: 1px solid #cdcdcd; border-radius: 3px; display: flex; background: #fbfafa; }
.tabs div { flex: 1; display: flex; align-items: center; justify-content: center; border-right: 1px solid #cdcdcd; }
.tabs .sel { background: #d2d0d0; }
.tabs div:last-child { border: 0; }
.page { width: 1296px; flex: none; position: relative; overflow: hidden; color: #0c0c0c; padding-left: 182px; background: linear-gradient(90deg, #e6e4e5 0, #e6e4e5 2px, #f6f4f5 3px, #f6f4f5 33px, #dddbdc 34px, #fdfdfd 35px, #fdfdfd 1294px, #e6e2e4 1296px); }
.page h1 { margin: 0; height: 36.800px; padding-left: 413.500px; font: 700 29px/33px "Liberation Sans", sans-serif; }
.page p { margin: 0; height: 29.820px; font-size: 23px; line-height: 29.820px; white-space: pre; }
.page p > span, .page h1 > span { display: inline-block; }
.page .dotline { height: 27.300px; line-height: 25px; }
.fig { margin: 5.500px 0 7.500px 17px; width: 379px; height: 137px; border: 2px solid #161616; background: #fff; padding: 4.500px 6px; display: grid; grid-template-columns: 114px 114px 114px; grid-template-rows: 37px 37px 37px; column-gap: 11px; row-gap: 7.500px; font: 17px/34px "DejaVu Serif", serif; color: #2b2b30; text-align: center; }
.fig div { border: 1.500px solid #7b30d0; }
.fig span { display: inline-block; transform: scaleX(1.29); }
.d1 { grid-area: 1 / 1 / 2 / 3; } .d2 { grid-area: 1 / 3 / 3 / 4; } .d3 { grid-area: 2 / 1; } .d4 { grid-area: 2 / 2; } .d5 { grid-area: 3 / 1 / 4 / 4; }
.cursor { position: absolute; left: 667px; top: 376px; }
.gutter { flex: 1; background: #f7f4f6; }

.speaker { position: absolute; left: 48px; top: 784px; font-size: 18px; line-height: 22px; text-shadow: 0 1px 2px rgba(0,0,0,.8), 1px 2px 3px rgba(0,0,0,.5); }
.speaker span, .nm span, .time span, .req span { display: inline-block; }
.bar { position: absolute; left: 351px; top: 702px; width: 1026px; height: 78px; border-radius: 6px; display: flex; box-shadow: 0 6px 18px rgba(0,0,0,.45), 0 1px 4px rgba(0,0,0,.25); }
.time { width: 132px; background: rgba(61,61,61,.965); border-radius: 6px 0 0 6px; display: flex; align-items: center; padding-left: 23px; font-weight: 700; font-size: 20.500px; color: #a3a3a3; }
.left { width: 313px; background: rgba(61,61,61,.965); border-left: 1px solid #222; display: grid; grid-template-columns: repeat(4, 78px); place-items: center; }
.right { width: 235px; background: rgba(43,43,43,.918); border-right: 1px solid #1f1f1f; display: grid; grid-template-columns: repeat(3, 78px); place-items: center; }
.line { fill: none; stroke: #fff; stroke-width: 1.600; }
.req { flex: 1; background: rgba(43,43,43,.918); display: flex; align-items: center; padding-left: 25px; }
.req button { width: 219px; height: 48px; margin: 0; padding: 0 0 2px; background: #1f1f1f; border: 1px solid #4a4a4a; border-radius: 5px; color: #fff; font: 700 20.800px "Liberation Sans", sans-serif; }
.hang { width: 78px; flex: none; background: #ad003e; border-radius: 0 6px 6px 0; display: flex; align-items: center; justify-content: center; }

.strip { height: 140px; display: flex; background: #1a1a1a; border-bottom: 1px solid #140c12; padding-left: 431px; flex: none; }
.av, .face { border-radius: 50%; display: flex; align-items: center; justify-content: center; font: 600 26px "Open Sans", sans-serif; padding-bottom: 2px; flex: none; }
.av { width: 63px; height: 63px; margin-top: 39px; }
.ap { background: #faedcd; color: #8a5c10; }
.al { background: #f6d1ce; color: #7c1010; margin: 39px 31px 0 63px; }
.tile { width: 270px; flex: none; display: flex; flex-direction: column; align-items: center; padding-top: 38px; }
.tile:last-child { width: 269px; }
.face { width: 66px; height: 66px; }
.ring { border-radius: 50%; }
.gs { background: #3b3b3b; } .gs .face { background: #c6d2e9; color: #0b1457; } .gs .nm { padding-right: 35px; }
.gg { background: radial-gradient(circle at 135px 71px, #4c4365 20px, #423b54 70px, #3a3542 140px); } .gg .face { background: #ffebd6; color: #925a22; } .gg .ring { box-shadow: 0 0 0 3px #504670; } .gg .nm { padding-right: 10px; }
.more { background: #333; } .more .face { background: #404040; border: 2px solid #1a1a1a; font-size: 9px; color: #e8e8e8; padding: 0; } .more .nm { padding-right: 20px; }
.cc { background: radial-gradient(circle at 135px 71px, #5a4c82 30px, #4b4064 65px, #3d3548 130px); } .cc .face { background: #cbd8dd; color: #0c3438; } .cc .ring { box-shadow: 0 0 0 3.500px #40355c, 0 0 0 7.500px #a58cfa; } .cc .nm { padding-right: 7px; }
.nm { margin-top: 10px; height: 24px; display: flex; align-items: center; font-size: 18px; line-height: 24px; text-shadow: 1px 2px 2px rgba(0,0,0,.6); }
.nm svg { margin-top: 1px; }
</style>
